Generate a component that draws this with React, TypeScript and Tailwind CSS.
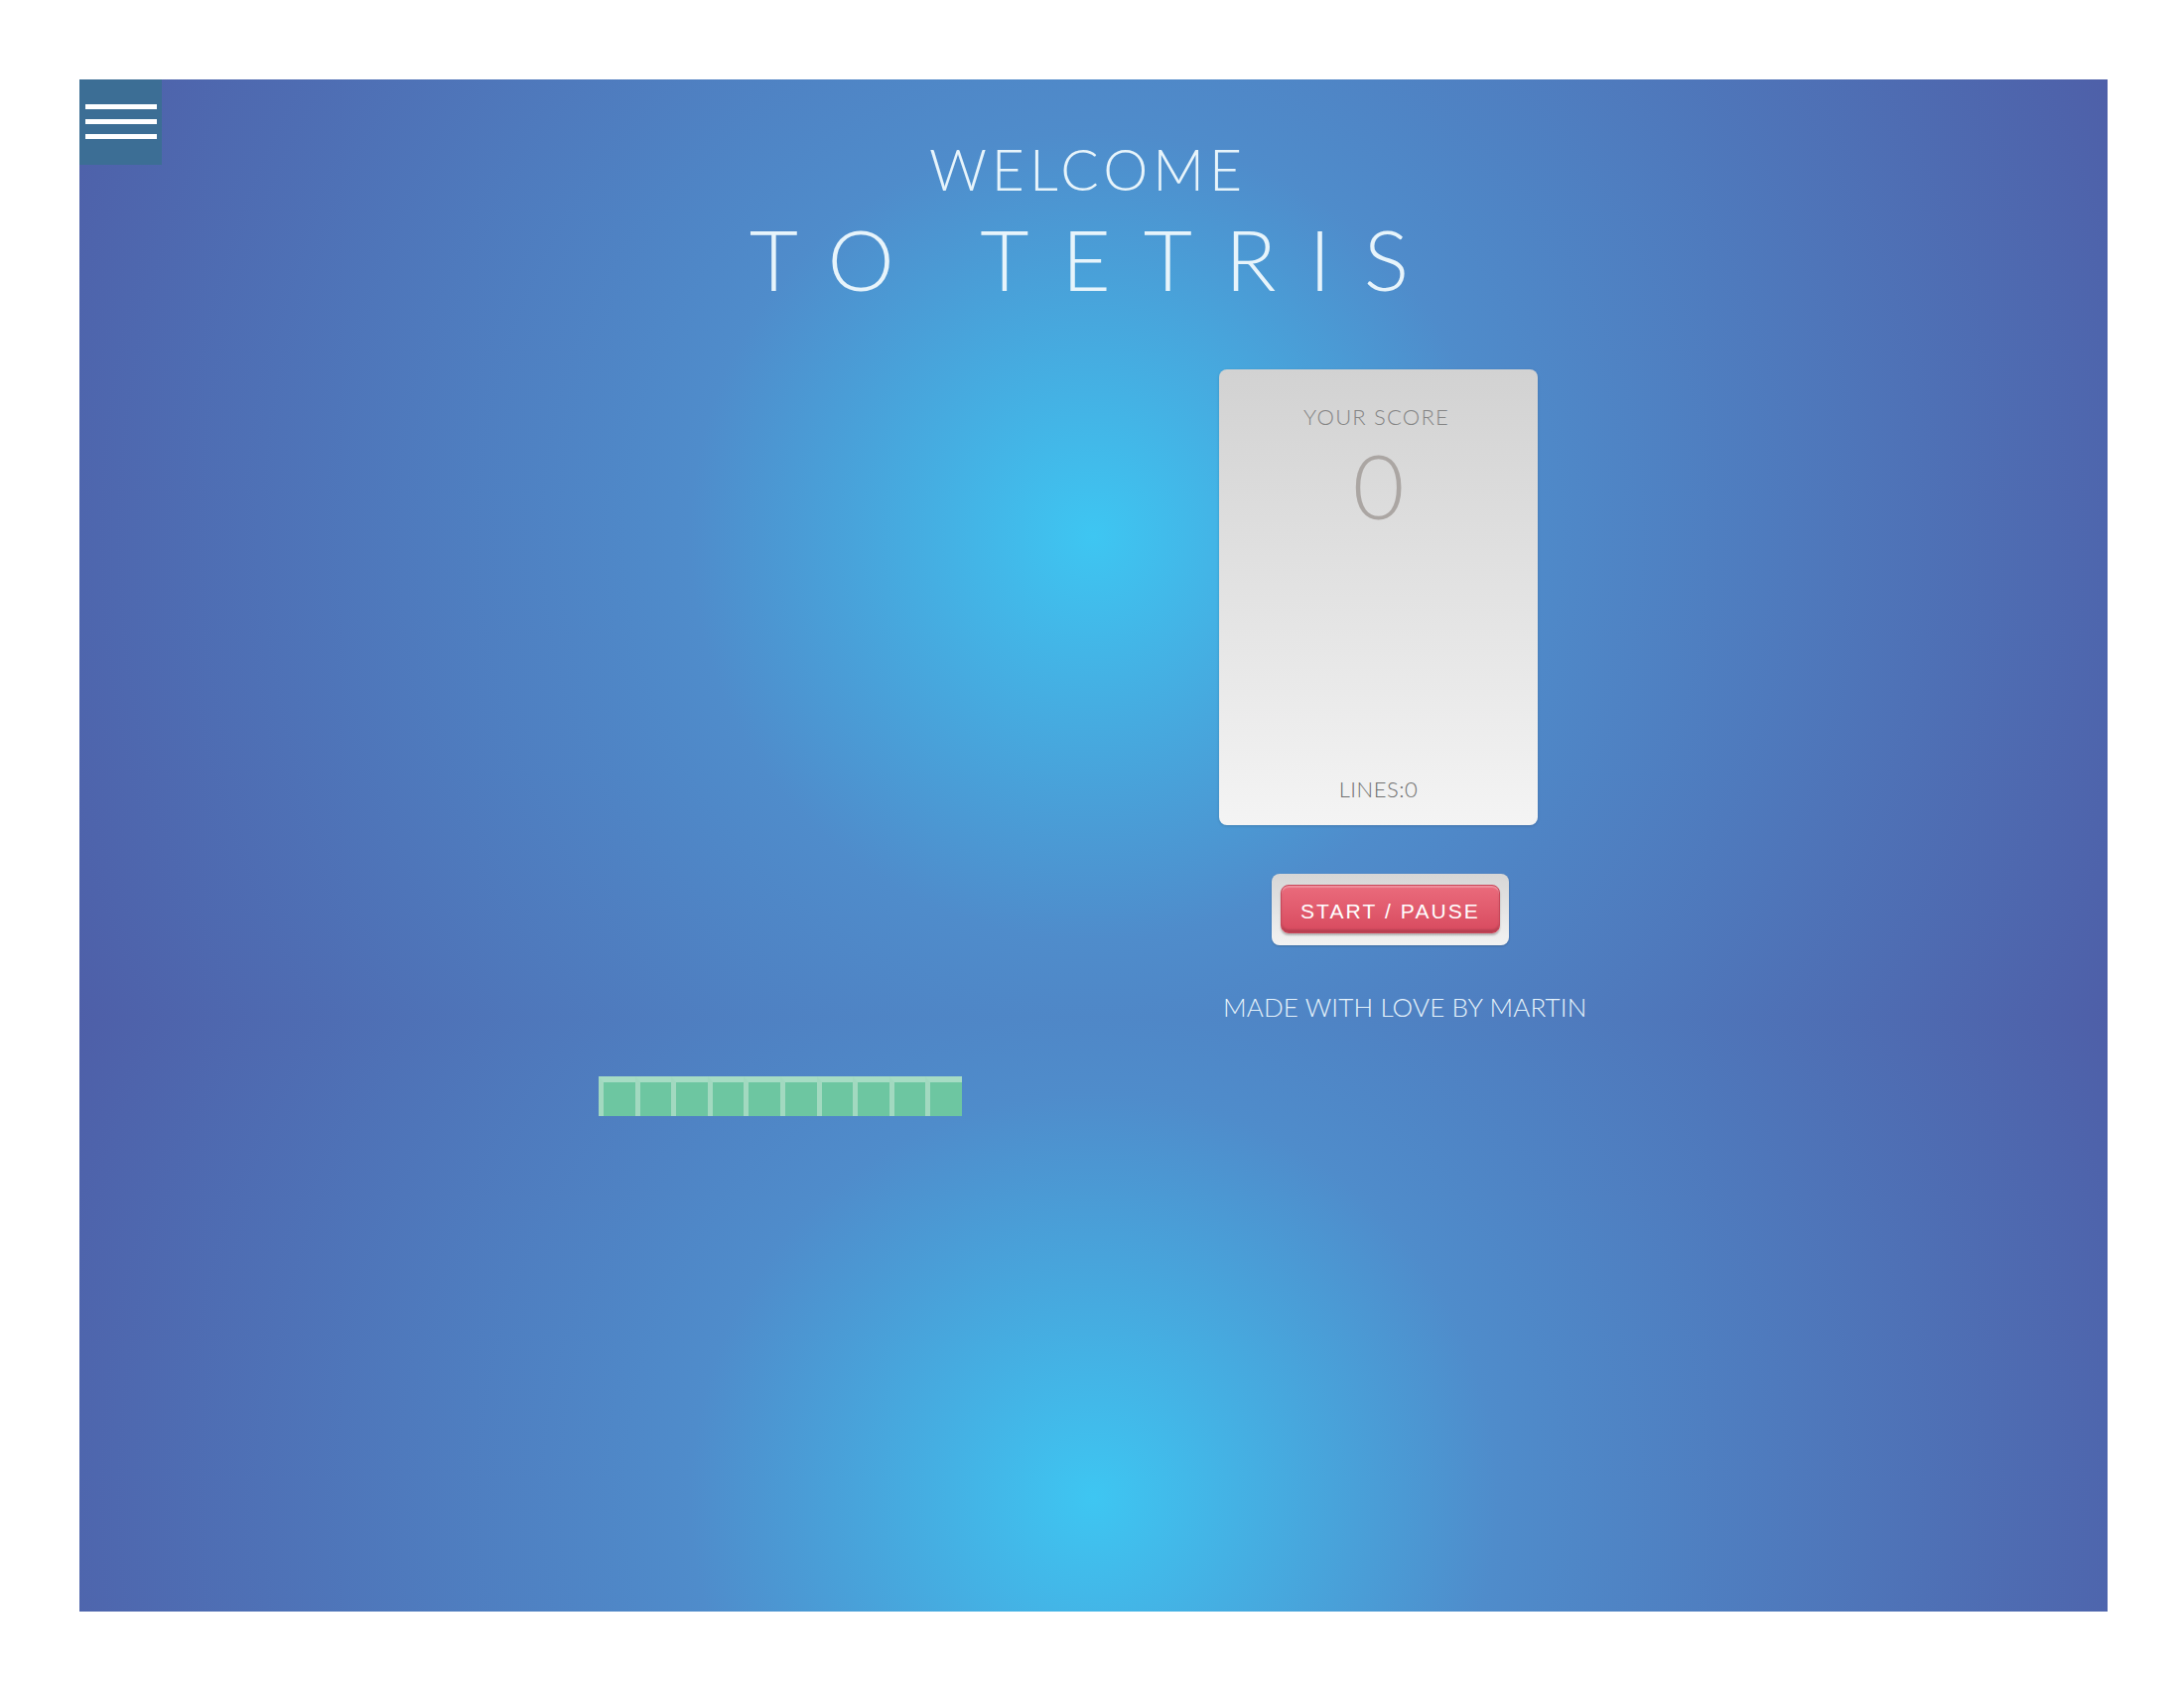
import React from "react";

const cells = Array.from({ length: 10 });

const Row = () => (
  <div className="flex h-[40px] w-[366px]">
    {cells.map((_, i) => (
      <div
        key={i}
        className="h-full flex-1 border-t-[6px] border-l-[5px] border-t-[#a6dcc4] border-l-[#a2d9c0] bg-[#6dc6a1]"
      />
    ))}
  </div>
);

const App = () => {
  return (
    <div className="h-[1700px] w-[2200px] bg-white pl-[80px] pt-[80px]">
      <div className="relative h-[1543px] w-[2043px] bg-[radial-gradient(circle_farthest-corner_at_50%_50%,#3ec6f2_0%,#4f8ccb_36%,#4e5fa8_100%)] bg-size-[100%_968px] bg-position-[50%_-24px] bg-repeat-y font-['Lato','Open_Sans',sans-serif]">
        <button className="absolute top-0 left-0 flex h-[86px] w-[83px] flex-col items-center gap-[10px] bg-[#3c6e95] pt-[25px]">
          <span className="block h-[5px] w-[72px] bg-white" />
          <span className="block h-[5px] w-[72px] bg-white" />
          <span className="block h-[5px] w-[72px] bg-white" />
        </button>

        <div className="flex flex-col items-center pt-[62px] text-[#e7f4fb]">
          <h2 className="pr-[11px] text-[57px] leading-none font-light tracking-[5px]">WELCOME</h2>
          <h1 className="mt-[19px] pl-[4px] text-[85px] leading-none font-light tracking-[33px]">
            TO TETRIS
          </h1>
        </div>

        <div className="mt-[69px] flex pl-[523px]">
          <div className="flex h-[752px] w-[366px] items-end">
            <Row />
          </div>

          <div className="ml-[259px] flex flex-col">
            <div className="flex h-[459px] w-[321px] flex-col items-center rounded-[8px] bg-gradient-to-b from-[#d2d2d2] to-[#f4f4f4] pt-[31px] pb-[20px] shadow-[0_1px_3px_rgba(0,0,0,0.15)]">
              <p className="pr-[4px] text-[22px] font-light tracking-[1.2px] text-[#858585]">YOUR SCORE</p>
              <p className="mt-[7px] text-[90px] leading-none font-light text-[#aba6a3]">0</p>
              <p className="mt-auto text-[22px] font-light tracking-[0.5px] text-[#707070]">LINES:0</p>
            </div>

            <div className="mt-[49px] ml-[53px] w-[239px] rounded-[8px] bg-gradient-to-b from-[#d6d6d6] to-[#f2f2f2] px-[9px] pt-[11px] pb-[12px] shadow-[0_1px_2px_rgba(0,0,0,0.2)]">
              <button className="flex h-[49px] w-full items-center justify-center rounded-[8px] border border-[#c9475a] bg-gradient-to-b from-[#ea6b7c] to-[#d84a5f] pt-[4px] font-['Liberation_Sans',Arial,sans-serif] text-[21px] font-normal tracking-[2.1px] text-white shadow-[inset_0_2px_1px_rgba(255,255,255,0.25),inset_0_-3px_2px_rgba(0,0,0,0.15),0_2px_2px_rgba(0,0,0,0.25)]">
                START / PAUSE
              </button>
            </div>

            <p className="mt-[43px] ml-[4px] text-[26px] font-light tracking-[0.15px] whitespace-nowrap text-[#e6f3fb]">
              MADE WITH LOVE BY MARTIN
            </p>
          </div>
        </div>
      </div>
    </div>
  );
};

export default App;
